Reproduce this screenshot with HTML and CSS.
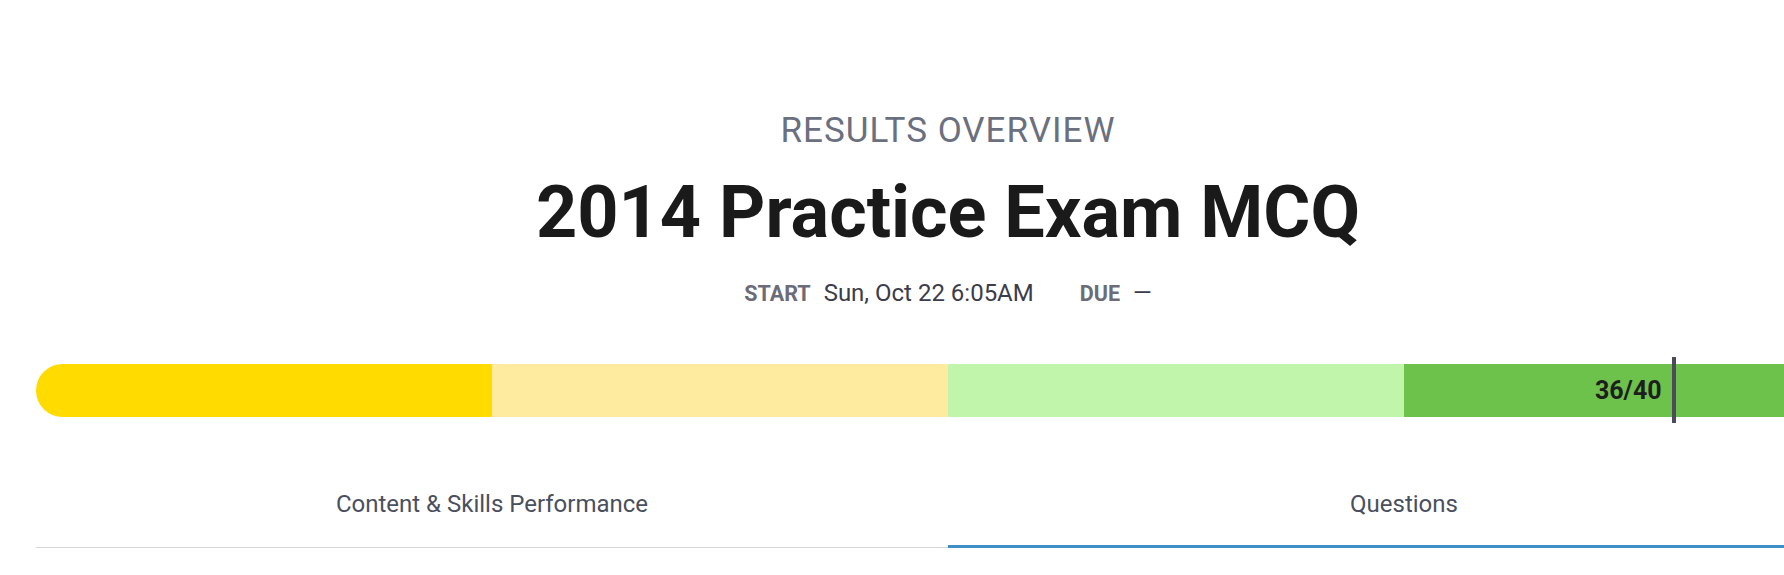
FILE: index.html
```html
<!DOCTYPE html>
<html>
<head>
<meta charset="utf-8">
<link rel="stylesheet" href="styles.css">
</head>
<body>
<div class="page">
  <header class="head">
    <div class="eyebrow">RESULTS OVERVIEW</div>
    <h1 class="title">2014 Practice Exam MCQ</h1>
    <div class="meta">
      <span class="meta-label">START</span>
      <span class="meta-value">Sun, Oct 22 6:05AM</span>
      <span class="meta-label due">DUE</span>
      <span class="meta-value">—</span>
    </div>
  </header>
  <div class="score">
    <div class="seg seg1"></div>
    <div class="seg seg2"></div>
    <div class="seg seg3"></div>
    <div class="seg seg4"></div>
    <div class="marker" style="left: calc(90% - 6px);">
      <span class="marker-label">36/40</span>
    </div>
  </div>
  <nav class="tabs">
    <div class="tab">Content &amp; Skills Performance</div>
    <div class="tab active">Questions</div>
  </nav>
</div>
</body>
</html>
```
FILE: styles.css
```css
html, body {
  margin: 0;
  padding: 0;
  overflow: hidden;
  background: #ffffff;
}
body {
  font-family: Roboto, "Liberation Sans", Arial, sans-serif;
  width: 1784px;
}
.page {
  width: 1824px;
  margin-left: 36px;
  padding-top: 111px;
}
.head {
  display: flex;
  flex-direction: column;
  align-items: center;
}
.eyebrow {
  font-size: 35px;
  line-height: 40px;
  letter-spacing: 1px;
  color: #6b7080;
  font-weight: 400;
}
.title {
  margin: 18px 0 0;
  font-size: 72px;
  line-height: 88px;
  font-weight: 700;
  color: #1a1a1a;
}
.meta {
  margin-top: 22px;
  display: flex;
  align-items: baseline;
  font-size: 24px;
  line-height: 28px;
  height: 28px;
}
.meta-label {
  font-weight: 700;
  color: #6c6c78;
  font-size: 21.5px;
  margin-right: 13px;
}
.meta-label.due {
  margin-left: 46px;
}
.meta-value {
  color: #3c3c4a;
}
.score {
  position: relative;
  margin-top: 57px;
  height: 53px;
  display: flex;
}
.seg {
  flex: 1;
}
.seg1 {
  background: #ffdb00;
  border-radius: 27px 0 0 27px;
}
.seg2 { background: #feeba0; }
.seg3 { background: #c0f5ab; }
.seg4 { background: #6cc24a; }
.marker {
  position: absolute;
  top: -7px;
  bottom: -6px;
  width: 4px;
  background: #4b4b5b;
}
.marker-label {
  position: absolute;
  right: 14px;
  top: 7px;
  line-height: 53px;
  font-size: 25px;
  font-weight: 700;
  color: #1e1e1e;
}
.tabs {
  display: flex;
  margin-top: 73px;
  border-bottom: 1px solid #d6d6d6;
}
.tab {
  flex: 1;
  text-align: center;
  font-size: 24px;
  line-height: 28px;
  color: #4a4f5e;
  padding-bottom: 30px;
  margin-bottom: -1px;
}
.tab.active {
  border-bottom: 3px solid #3d8fc6;
  padding-bottom: 27px;
}
```
